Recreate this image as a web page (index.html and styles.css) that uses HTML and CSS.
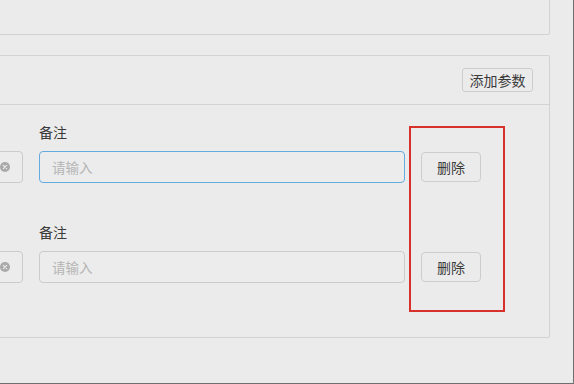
FILE: index.html
```html
<!DOCTYPE html>
<html lang="zh-CN">
<head>
    <meta charset="UTF-8">
    <meta name="viewport" content="width=device-width, initial-scale=1.0">
    <title>参数设置</title>
    <link rel="stylesheet" href="styles.css">
</head>
<body>
    <div class="screen">
        <div class="page">
            <div class="card top-card"></div>

            <div class="card params-card">
                <div class="card-header">
                    <button type="button" class="btn btn-small">添加参数</button>
                </div>

                <div class="card-body">
                    <div class="param-row">
                        <div class="field field-name">
                            <div class="label-spacer"></div>
                            <div class="input has-clear">
                                <span class="clear-icon">
                                    <svg width="10" height="10" viewBox="0 0 10 10">
                                        <circle cx="5" cy="5" r="5" fill="#a9a9a9"/>
                                        <path d="M3.3 3.3 L6.7 6.7 M6.7 3.3 L3.3 6.7" stroke="#ececec" stroke-width="1.2" stroke-linecap="round"/>
                                    </svg>
                                </span>
                            </div>
                        </div>
                        <div class="field field-note">
                            <label>备注</label>
                            <input type="text" class="input focused" placeholder="请输入">
                        </div>
                        <div class="row-action">
                            <button type="button" class="btn">删除</button>
                        </div>
                    </div>

                    <div class="param-row">
                        <div class="field field-name">
                            <div class="label-spacer"></div>
                            <div class="input has-clear">
                                <span class="clear-icon">
                                    <svg width="10" height="10" viewBox="0 0 10 10">
                                        <circle cx="5" cy="5" r="5" fill="#a9a9a9"/>
                                        <path d="M3.3 3.3 L6.7 6.7 M6.7 3.3 L3.3 6.7" stroke="#ececec" stroke-width="1.2" stroke-linecap="round"/>
                                    </svg>
                                </span>
                            </div>
                        </div>
                        <div class="field field-note">
                            <label>备注</label>
                            <input type="text" class="input" placeholder="请输入">
                        </div>
                        <div class="row-action">
                            <button type="button" class="btn">删除</button>
                        </div>
                    </div>
                </div>
            </div>
        </div>

        <!-- annotation box round the delete buttons -->
        <div class="highlight"></div>
    </div>
</body>
</html>
```

FILE: styles.css
```css
* {
    margin: 0;
    padding: 0;
    box-sizing: border-box;
}

body {
    font-family: "Noto Sans CJK SC", "Liberation Sans", sans-serif;
    background: #ebebeb;
    color: #333;
    overflow: hidden;
}

.screen {
    position: relative;
    width: 574px;
    height: 384px;
    background: #ebebeb;
    border-right: 1px solid #6f6f6f;
    border-bottom: 1px solid #6f6f6f;
    overflow: hidden;
}

.page {
    padding-right: 23px;
}

.card {
    border: 1px solid #d3d3d3;
    border-radius: 2px;
    background: #ebebeb;
    margin-left: -160px;
}

.top-card {
    height: 95px;
    margin-top: -60px;
}

.params-card {
    margin-top: 20px;
}

.card-header {
    height: 49px;
    padding: 0 16px;
    display: flex;
    align-items: center;
    justify-content: flex-end;
    border-bottom: 1px solid #d3d3d3;
}

.card-body {
    padding: 17px 68px 54px 16px;
}

.param-row {
    display: flex;
    align-items: flex-end;
    gap: 16px;
}

.param-row + .param-row {
    margin-top: 39px;
}

.field label {
    display: block;
    font-size: 14px;
    line-height: 21px;
    margin-bottom: 8px;
    color: #3a3a3a;
}

.label-spacer {
    height: 29px;
}

.field-name {
    width: 166px;
    flex: none;
}

.field-note {
    flex: 1;
}

.input {
    display: block;
    width: 100%;
    height: 32px;
    padding: 0 12px;
    border: 1px solid #cbcbcb;
    border-radius: 4px;
    background: #ececec;
    font-family: inherit;
    font-size: 13.5px;
    color: #333;
    outline: none;
}

.input::placeholder {
    color: #b5b5b5;
}

.input.focused {
    border-color: #64abdf;
}

.has-clear {
    display: flex;
    align-items: center;
    justify-content: flex-end;
    padding-right: 12px;
}

.clear-icon {
    display: flex;
}

.row-action {
    height: 32px;
    display: flex;
    align-items: center;
}

.btn {
    font-family: inherit;
    font-size: 14px;
    color: #3a3a3a;
    background: #ebebeb;
    border: 1px solid #cdcdcd;
    border-radius: 4px;
    height: 30px;
    width: 60px;
    cursor: pointer;
}

.btn-small {
    height: 24px;
    width: 71px;
    border-radius: 3px;
}

.highlight {
    position: absolute;
    left: 409px;
    top: 126px;
    width: 96px;
    height: 186px;
    border: 2px solid #d8312b;
}
```
